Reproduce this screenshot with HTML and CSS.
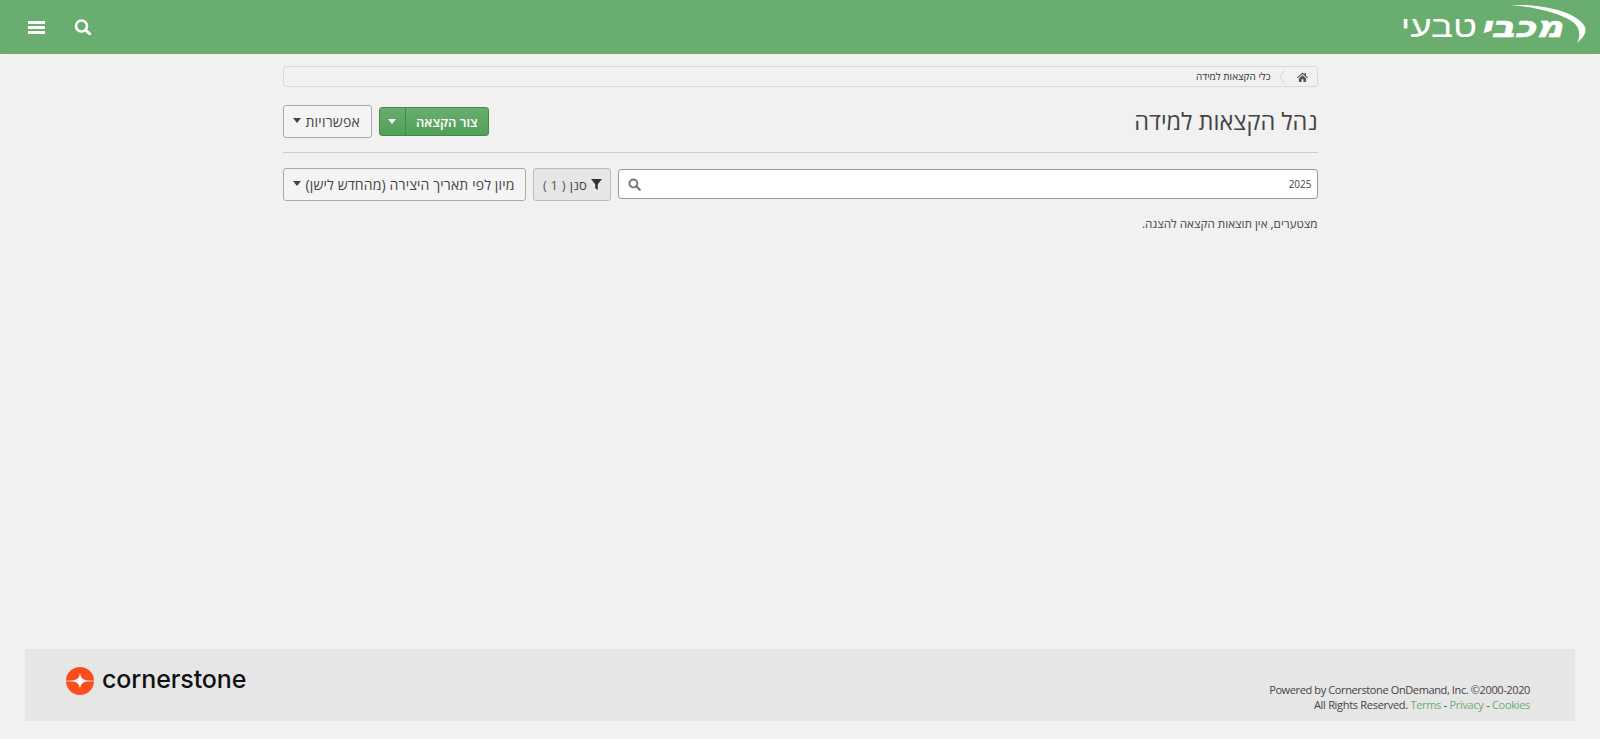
FILE: index.html
```html
<!DOCTYPE html>
<html lang="he" dir="rtl">
<head>
<meta charset="utf-8">
<title>נהל הקצאות למידה</title>
<link rel="stylesheet" href="styles.css">
</head>
<body>
<div class="page">
  <header class="topbar">
    <div class="logo">
      <svg class="swoosh" width="80" height="42" viewBox="0 0 80 42" aria-hidden="true"><path d="M2 1C30 0 68 6 77 23C79 29 75 34 69 39C73 31 72 24 65 18C50 8 26 3 2 1Z" fill="#fff"/></svg>
      <span class="logo-bold">מכבי</span><span class="logo-light">טבעי</span>
    </div>
    <div class="top-icons">
      <svg class="icon-search" width="18" height="16" viewBox="0 0 18 16" aria-hidden="true"><circle cx="7.5" cy="7" r="5.5" fill="none" stroke="#fff" stroke-width="2.6"/><path d="M11.5 11L15.8 15" stroke="#fff" stroke-width="3" stroke-linecap="round"/></svg>
      <svg class="icon-menu" width="17" height="13" viewBox="0 0 17 13" aria-hidden="true"><path d="M0 0h17v3H0zM0 5h17v3H0zM0 10h17v3H0z" fill="#fff"/></svg>
    </div>
  </header>
  <div class="shell">
    <main class="content">
      <nav class="crumbs">
        <svg class="icon-home" width="11" height="10" viewBox="0 0 12 11" aria-hidden="true"><path d="M6 .5L0 6l.8.8L6 2.2l5.2 4.6.8-.8L9.8 4V1H8.3v1.7zM2 7.2V11h3V8h2v3h3V7.2L6 3.6z" fill="#555"/></svg>
        <svg class="crumb-sep" width="6" height="14" viewBox="0 0 6 14" aria-hidden="true"><path d="M5.5 .5L.8 7l4.7 6.5" fill="none" stroke="#d5d5d5"/></svg>
        <span class="crumb-text">כלי הקצאות למידה</span>
      </nav>
      <div class="title-row">
        <h1>נהל הקצאות למידה</h1>
        <div class="actions">
          <div class="btn-green"><span class="green-main">צור הקצאה</span><span class="green-caret"><i class="caret caret-white"></i></span></div>
          <div class="btn">אפשרויות<i class="caret"></i></div>
        </div>
      </div>
      <div class="filter-row">
        <div class="search">
          <span class="search-value">2025</span>
          <svg width="13" height="13" viewBox="0 0 18 18" aria-hidden="true"><circle cx="7.5" cy="7.5" r="5.5" fill="none" stroke="#777" stroke-width="2.6"/><path d="M11.5 11.5L16.3 16.3" stroke="#777" stroke-width="3" stroke-linecap="round"/></svg>
        </div>
        <div class="btn btn-filter">
          <svg width="11" height="11" viewBox="0 0 11 11" aria-hidden="true"><path d="M0 0h11L6.8 5.2V11L4.2 9V5.2z" fill="#333"/></svg>
          <span>סנן</span><span class="count">( 1 )</span>
        </div>
        <div class="btn btn-sort">מיון לפי תאריך היצירה (מהחדש לישן)<i class="caret"></i></div>
      </div>
      <p class="empty">מצטערים, אין תוצאות הקצאה להצגה.</p>
    </main>
    <footer class="footer" dir="ltr">
      <div class="brand">
        <svg width="28" height="28" viewBox="0 0 28 28" aria-hidden="true"><circle cx="14" cy="14" r="14" fill="#fa4d1d"/><path d="M14 6C14.6 10.5 16.5 12.7 21 13.4L28 13.8V14.2L21 14.6C16.5 15.3 14.6 17.5 14 22C13.4 17.5 11.5 15.3 7 14.6L0 14.2V13.8L7 13.4C11.5 12.7 13.4 10.5 14 6Z" fill="#fff"/></svg>
        <span class="brand-name">cornerstone</span>
      </div>
      <div class="legal">
        <div>Powered by Cornerstone OnDemand, Inc. ©2000-2020</div>
        <div class="legal-links">All Rights Reserved. <a href="#">Terms</a> - <a href="#">Privacy</a> - <a href="#">Cookies</a></div>
      </div>
    </footer>
  </div>
</div>
</body>
</html>
```
FILE: styles.css
```css
* { box-sizing: border-box; }
html, body { margin: 0; height: 100%; }
body { background: #f3f3f3; color: #444; font-family: "Open Sans", "Noto Sans", "DejaVu Sans", sans-serif; font-size: 12px; overflow: hidden; }
.page { display: flex; flex-direction: column; height: 739px; }
.topbar { flex: none; height: 54px; background: #69ae6e; display: flex; justify-content: space-between; align-items: center; padding: 0 12px 0 28px; }
.logo { display: flex; align-items: center; gap: 20px; color: #fff; position: relative; width: 185px; height: 54px; padding-right: 25px; }
.swoosh { position: absolute; right: 0; top: 4px; }
.logo-bold, .logo-light { display: inline-block; font-family: "DejaVu Sans", sans-serif; font-size: 30px; line-height: 54px; transform-origin: right center; }
.logo-bold { font-weight: 700; font-style: italic; -webkit-text-stroke: .6px #fff; transform: scaleX(1.25); }
.logo-light { font-weight: 200; transform: scaleX(1.23); }
.top-icons { display: flex; align-items: center; gap: 29px; }
.shell { flex: 1; display: flex; flex-direction: column; margin: 0 7px; background: #f1f1f1; }
.content { width: 1035px; margin: 0 auto; padding-top: 12px; }
.crumbs { height: 21px; border: 1px solid #d8d8d8; border-radius: 3px; background: #f1f1f1; display: flex; align-items: center; padding: 0 9px; font-size: 10px; color: #333; }
.crumb-sep { margin: 0 12px 0 8px; }
.crumb-text { margin-top: -1px; }
.title-row { display: flex; justify-content: space-between; align-items: center; margin-top: 18px; padding-bottom: 14px; border-bottom: 1px solid #ccc; }
h1 { margin: 0; font-size: 23.5px; font-weight: 400; line-height: 29px; color: #444; }
.actions { display: flex; align-items: center; gap: 7px; }
.btn { height: 33px; display: flex; align-items: center; gap: 5px; padding: 0 11px 0 9px; background: #f4f4f4; border: 1px solid #aaa; border-radius: 3px; font-size: 14px; letter-spacing: .2px; color: #444; white-space: nowrap; }
.btn-sort { letter-spacing: .14px; }
.caret { display: block; width: 0; height: 0; border-style: solid; border-width: 5px 4.5px 0; border-color: #444 transparent transparent; margin-bottom: 3px; }
.caret-white { border-top-color: #f4f4f4; margin-bottom: 0; }
.btn-green { height: 29px; width: 110px; display: flex; border: 1px solid #458a4b; border-radius: 3px; background: linear-gradient(#69ae6e, #52a058); color: #fff; font-size: 13px; font-weight: 600; }
.green-main { flex: 1; display: flex; align-items: center; justify-content: center; }
.green-caret { width: 26px; display: flex; align-items: center; justify-content: center; border-right: 1px solid #458a4b; }
.filter-row { display: flex; align-items: flex-start; gap: 7px; margin-top: 15px; }
.search { flex: 1; height: 30px; margin-top: 1px; display: flex; align-items: center; justify-content: space-between; padding: 0 5px 0 9px; background: #fff; border: 1px solid #999; border-radius: 3px; font-size: 10px; }
.btn-filter { flex: none; width: 78px; justify-content: center; background: #e6e6e6; gap: 4px; padding: 0; border-color: #bbb; font-size: 13px; }
.count { color: #555; }
.empty { margin: 14px 0 0; font-size: 11.7px; line-height: 16px; }
.footer { margin: auto 18px 18px; flex: none; height: 72px; background: #e6e6e6; display: flex; justify-content: space-between; padding: 18px 45px 0 41px; }
.brand { display: flex; align-items: flex-start; gap: 8px; }
.brand-name { font-family: "Inter", sans-serif; font-size: 25px; font-weight: 500; letter-spacing: -.1px; color: #111; line-height: 24px; }
.legal { text-align: right; font-size: 11px; letter-spacing: -.38px; line-height: 15px; padding-top: 15px; color: #444; }
.legal-links { letter-spacing: -.3px; }
.legal a { color: #69ae6e; text-decoration: none; }
```
